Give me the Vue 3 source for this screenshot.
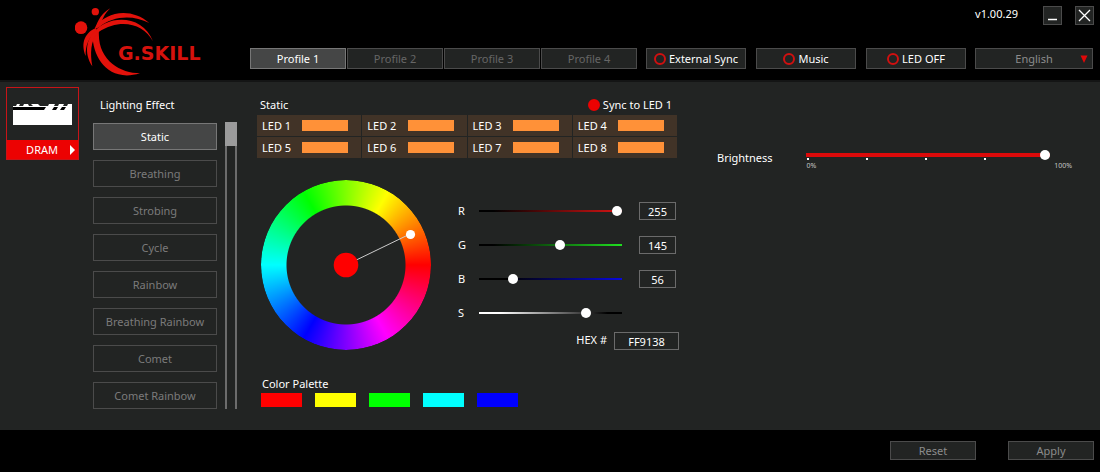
<template>
  <div class="app">
    <header class="header">
      <svg class="logo" width="150" height="72" viewBox="0 0 150 72" role="img" aria-label="G.SKILL">
        <g fill="#e3120b" transform="translate(-15 -6) scale(0.3333)">
          <circle cx="63" cy="83" r="19"/>
          <circle cx="106" cy="35" r="11"/>
          <path d="M151 25C128 38 112 60 105 88L122 78C126 58 134 40 151 25Z"/>
          <path d="M104 84C138 32 215 22 268 69C220 44 160 46 116 82Z"/>
          <path d="M100 98C140 44 248 40 279 124C250 70 180 54 116 96Z"/>
          <path d="M98 98C94 165 140 250 240 220C180 220 110 180 117 90Z"/>
          <path d="M108 84C78 96 60 126 77 168C76 136 86 110 110 98Z"/>
          <path d="M108 92C80 112 70 158 97 199C90 160 92 124 112 100Z"/>
        </g>
        <text class="logo-text" x="43" y="54">G.SKILL</text>
      </svg>

      <div class="header-side">
        <div class="window-bar">
          <span class="version">v1.00.29</span>
          <button class="window-btn" type="button" aria-label="Minimize">
            <svg width="17" height="17" viewBox="0 0 17 17" stroke="#fff" stroke-width="1.500">
              <path d="M4 12.500H13"/>
            </svg>
          </button>
          <button class="window-btn" type="button" aria-label="Close">
            <svg width="17" height="17" viewBox="0 0 17 17" stroke="#fff" stroke-width="1.300">
              <path d="M3 3L14 14M14 3L3 14"/>
            </svg>
          </button>
        </div>

        <nav class="toolbar">
          <div class="profiles">
            <button
                v-for="n in 4"
                :key="n"
                type="button"
                class="btn profile"
                :class="{ active: profile === n }"
                @click="profile = n"
            >Profile {{ n }}</button>
          </div>
          <div class="modes">
            <button v-for="mode in modes" :key="mode" type="button" class="btn mode">
              <span class="ring"></span>{{ mode }}
            </button>
          </div>
          <div class="language">
            <select v-model="language" class="btn" aria-label="Language">
              <option>English</option>
            </select>
            <svg class="arrow" width="8" height="8" viewBox="0 0 8 8"><path d="M0.500 0.500H7.500L4 8Z" fill="#e00808"/></svg>
          </div>
        </nav>
      </div>
    </header>

    <main class="main">
      <button class="device" type="button">
        <span class="device-image">
          <svg width="59" height="21" viewBox="0 0 59 21">
            <path d="M0 0H59V21H0Z" fill="#fff"/>
            <path d="M0 3H33L31 6H0ZM41 3H45L43 6H39ZM49 3H53L51 6H47Z" fill="#000"/>
            <path d="M0 0H4L3 2H0ZM7 0H11L10 2H6ZM15 0H18L20 2H16ZM25 0H36L35 2H27ZM42 0H46L45 2H41ZM51 0H55L54 2H50Z" fill="#222423"/>
          </svg>
        </span>
        <span class="device-name">
          DRAM
          <svg class="device-arrow" width="5" height="10" viewBox="0 0 5 10"><path d="M0 0L5 5L0 10Z" fill="#fff"/></svg>
        </span>
      </button>

      <section class="effects">
        <h2 class="title">Lighting Effect</h2>
        <div class="effects-body">
          <div class="effect-list">
            <button
                v-for="name in effects"
                :key="name"
                type="button"
                class="btn effect"
                :class="{ active: effect === name }"
                @click="effect = name"
            >{{ name }}</button>
          </div>
          <div class="scrollbar"><div class="scrollbar-thumb"></div></div>
        </div>
      </section>

      <section class="editor">
        <div class="editor-head">
          <h2 class="title">{{ effect }}</h2>
          <label class="sync"><input v-model="synced" type="checkbox">Sync to LED 1</label>
        </div>

        <div class="leds">
          <button v-for="n in 8" :key="n" type="button" class="led">
            <span>LED {{ n }}</span>
            <span class="led-color" :style="{ background: '#' + hex }"></span>
          </button>
        </div>

        <div class="picker">
          <div class="wheel">
            <div class="wheel-ring"></div>
            <svg class="wheel-overlay" viewBox="0 0 170 170">
              <path d="M85 85L149 54" stroke="#ccc" stroke-width="1"/>
              <circle cx="85" cy="85" r="12.300" fill="#f00"/>
              <circle cx="149.500" cy="54.500" r="4.600" fill="#fff"/>
            </svg>
          </div>

          <div class="values">
            <div class="channels">
              <div v-for="c in channels" :key="c.name" class="channel">
                <label :for="'range-' + c.name">{{ c.name }}</label>
                <input
                    :id="'range-' + c.name"
                    v-model.number="c.value"
                    class="range"
                    :class="'range-' + c.name.toLowerCase()"
                    type="range"
                    min="0"
                    :max="c.max"
                >
                <input
                    v-if="c.name !== 'S'"
                    v-model.number="c.value"
                    class="field"
                    type="text"
                    :aria-label="c.name + ' value'"
                >
              </div>
            </div>
            <div class="hex">
              <label for="hex">HEX #</label>
              <input id="hex" class="field field-hex" type="text" :value="hex" readonly>
            </div>
          </div>
        </div>

        <div class="palette">
          <h2 class="title">Color Palette</h2>
          <div class="swatches">
            <button
                v-for="color in palette"
                :key="color"
                type="button"
                class="swatch"
                :aria-label="color"
                :style="{ background: color }"
            ></button>
          </div>
        </div>
      </section>

      <section class="brightness">
        <label for="brightness">Brightness</label>
        <div class="brightness-control">
          <input id="brightness" v-model.number="brightness" class="range range-brightness" type="range" min="0" max="100">
          <div class="ticks"><i v-for="n in 4" :key="n"></i></div>
          <div class="scale"><span>0%</span><span>100%</span></div>
        </div>
      </section>
    </main>

    <footer class="footer">
      <button type="button" class="btn action">Reset</button>
      <button type="button" class="btn action">Apply</button>
    </footer>
  </div>
</template>

<script setup>
import { computed, reactive, ref } from 'vue'

const modes = ['External Sync', 'Music', 'LED OFF']
const effects = [
  'Static',
  'Breathing',
  'Strobing',
  'Cycle',
  'Rainbow',
  'Breathing Rainbow',
  'Comet',
  'Comet Rainbow'
]
const palette = ['#ff0000', '#ffff00', '#00ff00', '#00ffff', '#0000ff']

const profile = ref(1)
const effect = ref('Static')
const language = ref('English')
const synced = ref(true)
const brightness = ref(100)

const channels = reactive([
  { name: 'R', value: 255, max: 255 },
  { name: 'G', value: 145, max: 255 },
  { name: 'B', value: 56, max: 255 },
  { name: 'S', value: 77, max: 100 }
])

const hex = computed(() =>
  channels
    .slice(0, 3)
    .map((c) => Number(c.value).toString(16).padStart(2, '0'))
    .join('')
    .toUpperCase()
)
</script>

<style>
body {
  background: #000;
}
</style>

<style scoped>
.app {
  display: flex;
  flex-direction: column;
  min-height: 100vh;
  background: #000;
  color: #fff;
  font-family: "Noto Sans", "Open Sans", sans-serif;
  font-size: 11px;
  line-height: 16px;
}

.app *,
.app *::before {
  box-sizing: border-box;
}

button,
input,
select {
  margin: 0;
  padding: 0;
  border: 0;
  border-radius: 0;
  background: none;
  color: inherit;
  font: inherit;
}

.title {
  margin: 0;
  font-size: 11px;
  font-weight: 400;
  line-height: 16px;
}

.btn {
  border: 1px solid #4b4b4b;
  background: #222423;
  color: #666;
  text-align: center;
}

.btn.active {
  border-color: #777;
  background: #454646;
  color: #fff;
}

/* header */
.header {
  display: flex;
  justify-content: space-between;
  height: 80px;
  padding: 6px 6px 0 75px;
}

.logo-text {
  fill: #d5120d;
  font-family: "DejaVu Sans", sans-serif;
  font-size: 19px;
  font-weight: 700;
}

.header-side {
  display: flex;
  flex: 1;
  flex-direction: column;
  gap: 23px;
  margin-left: 25px;
}

.window-bar {
  display: flex;
  justify-content: flex-end;
  gap: 13px;
}

.version {
  margin-right: 12px;
}

.window-btn {
  display: grid;
  width: 19px;
  height: 19px;
  border: 1px solid #4b4b4b;
  background: #222423;
}

.toolbar {
  display: flex;
  gap: 9px;
  padding-right: 1px;
}

.toolbar .btn {
  height: 21px;
}

.profiles {
  display: flex;
  flex: 387;
  gap: 1px;
}

.profile {
  flex: 1;
}

.modes {
  display: flex;
  flex: 320;
  gap: 10px;
}

.mode {
  display: flex;
  flex: 1;
  align-items: center;
  justify-content: center;
  gap: 3px;
  white-space: nowrap;
}

.modes .btn {
  color: #fff;
}

.ring {
  width: 12px;
  height: 12px;
  border: 2px solid #d01010;
  border-radius: 50%;
}

.language {
  display: grid;
  flex: 118;
  align-items: center;
}

.language > * {
  grid-area: 1 / 1;
}

.language select {
  width: 100%;
  appearance: none;
  color: #8c8c8c;
  text-align-last: center;
}

.arrow {
  justify-self: end;
  margin-right: 5px;
  pointer-events: none;
}

/* main */
.main {
  display: flex;
  flex: 1;
  align-items: flex-start;
  padding: 5px 6px 17px;
  border-top: 2px solid #141515;
  background: #222423;
}

.device {
  display: flex;
  flex-direction: column;
  width: 73px;
  height: 73px;
  border: 1px solid #c81418;
}

.device-image {
  display: grid;
  flex: 1;
  width: 100%;
  place-items: center;
}

.device-name {
  display: flex;
  align-items: center;
  justify-content: flex-end;
  gap: 12px;
  width: 100%;
  height: 19px;
  padding-right: 3px;
  background: #ec0202;
}

.effects {
  margin: 10px 0 0 14px;
}

.effects .title {
  padding-left: 7px;
}

.effects-body {
  display: flex;
  gap: 8px;
  margin-top: 9px;
}

.effect-list {
  display: flex;
  flex-direction: column;
  gap: 10px;
  padding-top: 1px;
}

.effect {
  width: 124px;
  height: 27px;
  color: #7b7b7b;
}

.scrollbar {
  width: 12px;
  border: solid #6c6c6c;
  border-width: 0 2px;
}

.scrollbar-thumb {
  height: 24px;
  margin: 0 -2px;
  background: #9b9b9b;
}

.editor {
  width: 422px;
  margin: 10px 0 0 20px;
}

.editor-head {
  display: flex;
  justify-content: space-between;
  padding: 0 7px 0 3px;
}

.sync {
  display: flex;
  align-items: center;
  gap: 3px;
}

.sync input {
  width: 12px;
  height: 12px;
  appearance: none;
  border: 2px solid #ec0202;
  border-radius: 50%;
}

.sync input:checked {
  background: #ec0202;
}

.leds {
  display: grid;
  grid-template-columns: repeat(4, 1fr);
  gap: 1px;
  width: 420px;
  margin-top: 2px;
}

.led {
  display: flex;
  align-items: center;
  justify-content: space-between;
  height: 21px;
  padding: 0 13px 0 5px;
  background: #413327;
}

.led-color {
  width: 46px;
  height: 11px;
}

.picker {
  display: flex;
  gap: 27px;
  margin: 22px 0 0 4px;
}

.wheel {
  display: grid;
  width: 170px;
  height: 170px;
}

.wheel > * {
  grid-area: 1 / 1;
}

.wheel-ring {
  border-radius: 50%;
  background: conic-gradient(from 90deg, #f00, #f0f, #00f, #0ff, #0f0, #ff0, #f00);
  mask: radial-gradient(circle, transparent 59px, #000 60px);
}

.wheel-overlay {
  z-index: 1;
}

.values {
  display: flex;
  flex: 1;
  flex-direction: column;
  gap: 10px;
  padding-top: 22px;
}

.channels {
  display: flex;
  flex-direction: column;
  gap: 16px;
}

.channel {
  display: grid;
  grid-template-columns: 21px 143px 37px;
  align-items: center;
  height: 18px;
}

.channel .field {
  margin-left: 17px;
}

.range {
  width: 100%;
  height: 10px;
  appearance: none;
}

.range::-webkit-slider-runnable-track {
  height: 2px;
}

.range::-webkit-slider-thumb {
  width: 10px;
  height: 10px;
  margin-top: -4px;
  appearance: none;
  border-radius: 50%;
  background: #fff;
}

.range-r::-webkit-slider-runnable-track {
  background: linear-gradient(90deg, #000 10%, #d81414);
}

.range-g::-webkit-slider-runnable-track {
  background: linear-gradient(90deg, #000 10%, #20e020);
}

.range-b::-webkit-slider-runnable-track {
  background: linear-gradient(90deg, #000 20%, #0808dc);
}

.range-s::-webkit-slider-runnable-track {
  background: linear-gradient(90deg, #fff 15%, #000 90%);
}

.range-brightness::-webkit-slider-runnable-track {
  height: 4px;
  background: #dc0a0a;
}

.range-brightness::-webkit-slider-thumb {
  margin-top: -3px;
}

.field {
  width: 37px;
  height: 18px;
  border: 1px solid #6b6b6b;
  text-align: center;
}

.hex {
  display: flex;
  justify-content: flex-end;
  gap: 7px;
}

.field-hex {
  width: 65px;
}

.palette {
  margin: 26px 0 0 4px;
}

.palette .title {
  padding-left: 1px;
}

.swatches {
  display: flex;
  gap: 13px;
  margin-top: 1px;
}

.swatch {
  width: 41px;
  height: 14px;
}

.brightness {
  display: flex;
  flex: 1;
  gap: 33px;
  margin: 63px 22px 0 38px;
}

.brightness-control {
  flex: 1;
}

.brightness .range {
  display: block;
  width: calc(100% - 22px);
}

.ticks {
  display: flex;
  gap: 57px;
  padding-left: 1px;
  margin-top: -2px;
}

.ticks i {
  width: 2px;
  height: 2px;
  background: #fff;
}

.scale {
  display: flex;
  justify-content: space-between;
  padding-left: 1px;
  color: #c4c4c4;
  font-size: 7px;
  line-height: 12px;
}

/* footer */
.footer {
  display: flex;
  justify-content: flex-end;
  gap: 32px;
  padding: 11px 6px 12px;
}

.action {
  width: 86px;
  height: 19px;
  color: #8c8c8c;
  line-height: 17px;
}
</style>
